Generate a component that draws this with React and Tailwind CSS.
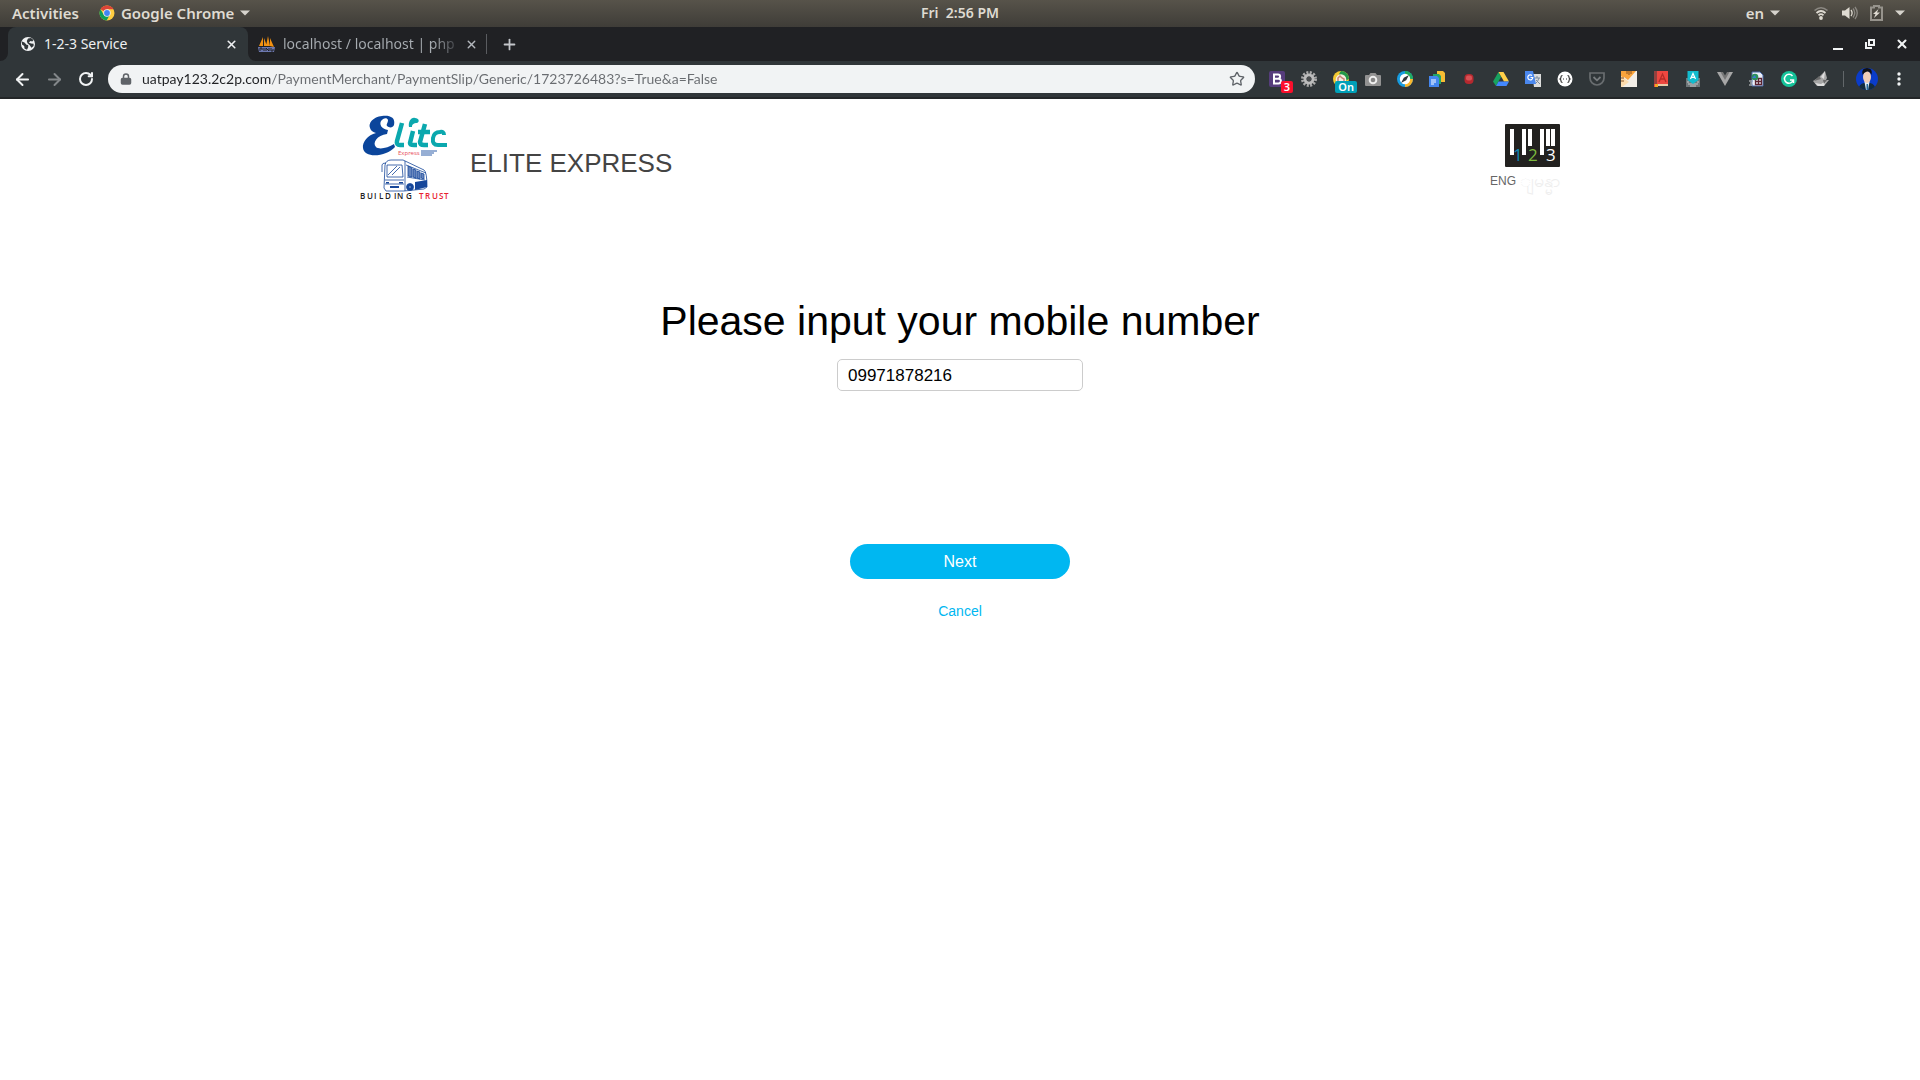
import { ArrowLeft, ArrowRight, Lock, Plus, RotateCw, Star, X } from "lucide-react";

function Caret() {
  return (
    <svg width="10" height="6" viewBox="0 0 10 6" aria-hidden="true">
      <path d="M0 0.5h10L5 5.5z" fill="#d6d3cc" />
    </svg>
  );
}

function ChromeIcon() {
  return (
    <svg width="16" height="16" viewBox="0 0 16 16" aria-hidden="true">
      <circle cx="8" cy="8" r="7.5" fill="#ffcd40" />
      <path d="M8 8L1.5 4.2A7.5 7.5 0 0 1 14.5 4.2H8z" fill="#db4437" />
      <path d="M1.5 4.2A7.5 7.5 0 0 0 7.6 15.5L11 9.6 8 8 4.8 9.7z" fill="#0f9d58" />
      <circle cx="8" cy="8" r="3.7" fill="#f1f1f1" />
      <circle cx="8" cy="8" r="2.9" fill="#4285f4" />
    </svg>
  );
}

function SystemBar() {
  return (
    <header className="grid h-[27px] grid-cols-3 items-center bg-gradient-to-b from-[#57534a] to-[#3f3d38] px-3 pb-0.5 text-[15px] leading-5 font-semibold text-[#dfdbd2]">
      <div className="flex items-center">
        <button type="button">Activities</button>
        <button type="button" className="ml-5 flex items-center gap-1.5">
          <ChromeIcon />
          Google Chrome
          <Caret />
        </button>
      </div>
      <p className="text-center text-sm whitespace-pre">Fri  2:56 PM</p>
      <div className="flex items-center justify-end">
        <button type="button" className="mr-[34px] flex items-center gap-1.5">
          en <Caret />
        </button>
        <button type="button" aria-label="System menu" className="flex items-center gap-3 pr-[3px]">
          <svg width="16" height="14" viewBox="0 0 16 14" fill="none">
            <path d="M0.5 4.5Q7-1 13.5 4.5" stroke="#8b8882" strokeWidth="1.6" />
            <path d="M2.5 7Q7 3 11.5 7M4.5 9.3Q7 7 9.5 9.3" stroke="#dfdbd2" strokeWidth="1.8" />
            <circle cx="7" cy="12" r="1.9" fill="#dfdbd2" />
          </svg>
          <svg width="16" height="14" viewBox="0 0 16 14" fill="none">
            <path d="M0 4.5h3L7.5 1v12L3 9.5H0z" fill="#dfdbd2" />
            <path d="M9 4q2.2 3 0 6" stroke="#dfdbd2" strokeWidth="1.3" />
            <path d="M11 2.5q3.5 4.5 0 9M13 1q4.5 6 0 12" stroke="#8b8882" strokeWidth="1.3" />
          </svg>
          <svg width="13" height="16" viewBox="0 0 13 16" fill="none">
            <path d="M1 2.5h3V1h5v1.5h3V15H1z" stroke="#96938c" strokeWidth="2" />
            <path d="M8.5 4L3 9h2.5l-1.5 4 6-5.500H7z" fill="#dfdbd2" />
          </svg>
          <Caret />
        </button>
      </div>
    </header>
  );
}

function TabBar() {
  return (
    <div className="flex h-[34px] items-center bg-[#202124] pl-2 text-sm">
      <div className="relative flex h-full w-60 items-center rounded-t-lg bg-[#303639] pr-2.5 pl-3 text-[#eef0f1]">
        <svg className="absolute bottom-0 -left-2" width="8" height="8" viewBox="0 0 8 8">
          <path d="M8 0v8H0a8 8 0 0 0 8-8z" fill="#303639" />
        </svg>
        <svg className="absolute -right-2 bottom-0" width="8" height="8" viewBox="0 0 8 8">
          <path d="M0 0v8h8a8 8 0 0 1-8-8z" fill="#303639" />
        </svg>
        <svg width="16" height="16" viewBox="0 0 16 16">
          <circle cx="8" cy="8" r="7" fill="#f1f3f4" />
          <path d="M2 5.5l2.5 1 2 2.2 1.7.3v2.3L7 13.8 4.5 12.5 4.2 10 2 8.5zM8 2.5l3-.5 2.5 2-1.2 1.5-1.8-.4-1.7 1.3 2.2 1.1 2.6.3v2.3l-2.2 1.6-1.6-2.5L7.5 7.3 6.8 5z" fill="#303639" />
        </svg>
        <span className="ml-2 flex-1">1-2-3 Service</span>
        <button type="button" aria-label="Close 1-2-3 Service">
          <X size={13} strokeWidth={3} />
        </button>
      </div>
      <div className="flex h-full w-[238px] items-center pr-2 pl-2.5">
        <svg width="17" height="16" viewBox="0 0 17 16">
          <path d="M5 1L1 10h4zM6 2v8h3zM10 0L8 10h4zM12 2v8l4 1z" fill="#f29111" />
          <path d="M0 11h17l-1 5H1z" fill="#6c78af" />
          <path d="M2 15v-3h2v2M6 12v3M8 15v-3l3 3v-3M13 12v3h2v-2" fill="none" stroke="#202124" />
        </svg>
        <span className="ml-2 flex-1 bg-[linear-gradient(90deg,#a8adb2_150px,#303236_176px)] bg-clip-text whitespace-nowrap text-transparent">
          localhost / localhost | php
        </span>
        <button type="button" aria-label="Close localhost" className="text-[#b4b8bd]">
          <X size={13} strokeWidth={2.5} />
        </button>
      </div>
      <div className="h-5 w-px bg-[#5a5c60]" />
      <button type="button" aria-label="New tab" className="ml-3.5 text-[#c3c6ca]">
        <Plus size={17} strokeWidth={2.5} />
      </button>
      <div className="ml-auto flex items-center pr-0.5 text-[#f1f3f4]">
        <button type="button" aria-label="Minimize" className="flex w-8 justify-center">
          <svg width="12" height="12"><path d="M1 10h10v2H1z" fill="currentColor" /></svg>
        </button>
        <button type="button" aria-label="Restore" className="flex w-8 justify-center">
          <svg width="12" height="12" fill="none" stroke="currentColor" strokeWidth="2">
            <path d="M5 2h5v5H5zM2 4v6h6" />
          </svg>
        </button>
        <button type="button" aria-label="Close window" className="flex w-8 justify-center">
          <X size={14} strokeWidth={3.5} />
        </button>
      </div>
    </div>
  );
}

const extensions = [
  {
    name: "Bootstrap",
    badge: "3",
    badgeClass: "bg-[#fb0f2c]",
    art: (
      <>
        <rect width="16" height="16" rx="2" fill="#563d7c" />
        <path d="M5 3.5h4a2 2 0 0 1 0 4.2H5zM5 7.7h4.500a2.3 2.3 0 0 1 0 4.8H5z" fill="none" stroke="#fff" strokeWidth="2" />
      </>
    ),
  },
  {
    name: "Settings",
    art: (
      <>
        <circle cx="8" cy="8" r="6.5" fill="none" stroke="#aaa" strokeWidth="3" strokeDasharray="2 1.4" />
        <circle cx="8" cy="8" r="4" fill="none" stroke="#bcbcbc" strokeWidth="3" />
        <circle cx="8" cy="8" r="2.4" fill="#4b4e50" />
      </>
    ),
  },
  {
    name: "Toggle",
    badge: "On",
    badgeClass: "bg-[#00a0b8]",
    art: (
      <>
        <circle cx="8" cy="8" r="8" fill="#f5c932" />
        <path d="M8 0a8 8 0 0 1 8 8l-4 2L6 3z" fill="#23984a" />
        <circle cx="8" cy="8.5" r="5.3" fill="#f6ede1" />
        <path d="M5 10V7l2-2 2 2 2 1v2" fill="none" stroke="#c98477" strokeWidth="1.5" />
      </>
    ),
  },
  {
    name: "Screenshot",
    art: (
      <>
        <path d="M1 4h3l1.5-2h5L12 4h3q1 0 1 1v9q0 1-1 1H1q-1 0-1-1V5q0-1 1-1z" fill="#929292" />
        <circle cx="8" cy="9" r="4.3" fill="#eee" />
        <circle cx="8" cy="9" r="2.3" fill="#858585" />
      </>
    ),
  },
  {
    name: "Compass",
    art: (
      <>
        <circle cx="8" cy="8" r="8" fill="#169ce0" />
        <path d="M8 0a8 8 0 0 1 8 8H8z" fill="#22ad60" />
        <path d="M16 8a8 8 0 0 1-8 8V8z" fill="#fbb62b" />
        <circle cx="8" cy="8" r="5.2" fill="#fff" />
        <path d="M12 4L9.2 9.2 4 12l2.8-5.200z" fill="#30363a" />
      </>
    ),
  },
  {
    name: "Copy files",
    art: (
      <>
        <path d="M8 0h6l2 2v9H8z" fill="#f6bd33" />
        <path d="M4 3h6l2 2v8H4z" fill="#23a566" />
        <path d="M0 5h8l2 2v9H0z" fill="#4486ee" />
        <path d="M2 9h5M2 11h5M2 13h3" stroke="#fff" />
      </>
    ),
  },
  {
    name: "Recorder",
    art: (
      <>
        <rect x="3.5" y="3" width="9" height="10" rx="4" fill="#b5292f" />
        <rect x="5" y="4.5" width="6" height="5" rx="2" fill="#d85155" />
      </>
    ),
  },
  {
    name: "Drive",
    art: (
      <>
        <path d="M5.5 1L0 10.5 3 15 8 6z" fill="#18a260" />
        <path d="M5.5 1h5L16 10.5h-5z" fill="#ffcf48" />
        <path d="M5.5 10.5H16L13.500 15H3z" fill="#4387fd" />
      </>
    ),
  },
  {
    name: "Translate",
    art: (
      <>
        <path d="M7 3h9v13H9z" fill="#dcdcdc" />
        <path d="M9 7h6M12 5v2M14 7q-1 4-4 6M11 9l4 4" stroke="#7b8ba0" fill="none" />
        <path d="M0 0h8l3 13H0z" fill="#4a87ed" />
        <path d="M7 4.5a2.5 2.5 0 1 0 .8 2H5.5" fill="none" stroke="#fff" strokeWidth="1.2" />
      </>
    ),
  },
  {
    name: "JSON viewer",
    art: (
      <>
        <circle cx="8" cy="8" r="7.5" fill="#fff" />
        <path d="M5.500 4.500q-1.500 0-1.500 1.500t-1 2q1 .5 1 2t1.500 1.500M10.500 4.500q1.500 0 1.500 1.500t1 2q-1 .5-1 2t-1.500 1.500" fill="none" stroke="#333" strokeWidth="1.2" />
        <path d="M6 8h1M9 8h1" stroke="#333" strokeWidth="1.2" />
      </>
    ),
  },
  {
    name: "Pocket",
    art: (
      <>
        <path d="M1 2h14v5a7 7 0 0 1-14 0z" fill="none" stroke="#696d70" strokeWidth="1.7" />
        <path d="M4.5 6L8 9.3 11.5 6" fill="none" stroke="#777b7e" strokeWidth="1.8" />
      </>
    ),
  },
  {
    name: "Notes",
    art: (
      <>
        <path d="M0 0h16v16H0z" fill="#f2eee8" />
        <path d="M0 0h15L7 9 3 6 0 8z" fill="#faa43c" />
        <path d="M0 5l8 6-7 5H0z" fill="#fddcae" />
        <path d="M6 0v3M8 0v4M10 0v3M0 7h3M0 10h3" stroke="#8a5223" />
      </>
    ),
  },
  {
    name: "Dictionary",
    art: (
      <>
        <path d="M1 0h14v13H3v3H1z" fill="#ed4740" />
        <path d="M1 0h3v13H1z" fill="#94413f" />
        <path d="M3 13h12v2H3z" fill="#e8c9a8" />
        <path d="M2 13h3v3H2z" fill="#f5a623" />
        <path d="M6 11l3.5-8L13 11M7 8h5" fill="none" stroke="#b52c27" strokeWidth="1.3" />
      </>
    ),
  },
  {
    name: "Input tools",
    art: (
      <>
        <path d="M1 7h14v9H1z" fill="#6f777a" />
        <path d="M3 13h10M2 11h2M12 11h2M5 15h6" stroke="#c8cccd" />
        <path d="M2.5 0h11v9L8 13 2.5 9z" fill="#12bccf" />
        <path d="M5.5 8L8 2.5 10.5 8M6.5 6.300h3" fill="none" stroke="#fff" strokeWidth="1.2" />
      </>
    ),
  },
  {
    name: "Vue",
    art: (
      <>
        <path d="M0 1h16L8 15z" fill="#a7a7a7" />
        <path d="M3.5 1h9L8 9z" fill="#777" />
        <path d="M6 1h4L8 4.5z" fill="#303639" />
      </>
    ),
  },
  {
    name: "Page inspector",
    art: (
      <>
        <path d="M3 1h8l3 3v11H3z" fill="#e9eef8" stroke="#4a69a6" />
        <path d="M6.5 7.5h6v6h-6zM9.500 7v7M6 10.5h7" fill="none" stroke="#5d2330" strokeWidth="1.3" />
        <circle cx="6" cy="6" r="3.3" fill="#2a8f5a" />
        <path d="M3 7l3-3 1 3z" fill="#3b79d8" />
        <path d="M0 10h3M1 12h3M0 14h3" stroke="#d7d9dc" />
      </>
    ),
  },
  {
    name: "Grammarly",
    art: (
      <>
        <circle cx="8" cy="8" r="8" fill="#15c39a" />
        <path d="M11.5 5A4.500 4.500 0 1 0 12.300 9M9 9h3.5v3" fill="none" stroke="#fff" strokeWidth="1.5" />
      </>
    ),
  },
  {
    name: "Fox",
    art: (
      <>
        <path d="M12 0l2 7-1 2 3 0-5 6-7 0-4-5 6-4z" fill="#a5a5a5" />
        <path d="M12 0L8 6l3 2zM2 12l6 1 5-3-2 5-6 0z" fill="#dedede" />
        <path d="M6 5L1 10l7-2zM10 9l4 0-3 4z" fill="#6b6b6b" />
      </>
    ),
  },
];

function AddressBar() {
  return (
    <div className="flex h-[38px] items-center border-b-2 border-[#232628] bg-[#303639] text-[#f1f3f4]">
      <div className="flex w-[108px] shrink-0 items-center pl-1.5">
        <button type="button" aria-label="Back" className="flex w-8 justify-center">
          <ArrowLeft size={19} strokeWidth={2.5} />
        </button>
        <button type="button" aria-label="Forward" className="flex w-8 justify-center text-[#83878a]">
          <ArrowRight size={19} strokeWidth={2.5} />
        </button>
        <button type="button" aria-label="Reload" className="flex w-8 justify-center">
          <RotateCw size={16} strokeWidth={3} />
        </button>
      </div>
      <div className="flex h-7 flex-1 items-center rounded-full bg-[#f1f3f4] pr-[10px] pl-3">
        <Lock size={12} strokeWidth={3} className="shrink-0 text-[#5f6368] [&_rect]:fill-[#5f6368]" />
        <input
          type="text"
          aria-label="Address"
          defaultValue="uatpay123.2c2p.com/PaymentMerchant/PaymentSlip/Generic/1723726483?s=True&a=False"
          className="ml-2.5 flex-1 bg-[linear-gradient(90deg,#202124_130px,#696c70_130px)] bg-clip-text font-['Lato',sans-serif] text-sm text-transparent outline-none"
        />
        <button type="button" aria-label="Bookmark this page" className="text-[#5f6368]">
          <Star size={16} />
        </button>
      </div>
      <div className="ml-1.5 flex shrink-0 items-center">
        {extensions.map((ext) => (
          <button key={ext.name} type="button" aria-label={ext.name} className="relative flex w-8 justify-center">
            <svg width="16" height="16" viewBox="0 0 16 16">{ext.art}</svg>
            {ext.badge && (
              <span className={`absolute top-2.5 right-0 rounded-xs px-[3px] text-[11px] leading-3 font-semibold text-white ${ext.badgeClass}`}>
                {ext.badge}
              </span>
            )}
          </button>
        ))}
        <div className="ml-1.5 h-4 w-px bg-[#62676a]" />
        <button type="button" aria-label="Profile" className="ml-3">
          <svg width="22" height="22" viewBox="0 0 22 22">
            <clipPath id="avatar"><circle cx="11" cy="11" r="11" /></clipPath>
            <g clipPath="url(#avatar)">
              <path d="M0 0h22v22H0z" fill="#0b3cc9" />
              <path d="M2 22q1-6 6-7h6q5 1 6 7z" fill="#132b3d" />
              <path d="M8.5 14h5L12 22H10z" fill="#e4edf5" />
              <path d="M10.5 16h1.500l.5 6h-2z" fill="#286a9b" />
              <ellipse cx="11" cy="9" rx="4" ry="6" fill="#f0cdb8" />
              <path d="M6.5 7Q5 0 11 0t4.500 7Q14 3 11 3.500T6.500 7z" fill="#101014" />
            </g>
          </svg>
        </button>
        <button type="button" aria-label="Menu" className="flex w-[42px] justify-center">
          <svg width="4" height="14" fill="currentColor">
            <circle cx="2" cy="2" r="1.7" />
            <circle cx="2" cy="7" r="1.7" />
            <circle cx="2" cy="12" r="1.7" />
          </svg>
        </button>
      </div>
    </div>
  );
}

function EliteLogo() {
  return (
    <svg width="90" height="86" viewBox="0 0 90 86" role="img" aria-label="Elite Express, building trust">
      {/* capital E swash */}
      <path d="M34 10c2-8-5-10-12-9-9 1-14 7-12 12 1 3 3 4 6 5-8 2-14 9-13 15 1 8 13 9 23 5 3-1 7-4 9-6l-1-3c-6 4-15 6-18 3-4-4 1-12 11-13l1-4c-6-1-9-5-7-9 2-3 6-4 7-1 0 3-2 4-1 6 2 2 6 2 7-1z" fill="#0b459b" />
      <g fill="none" stroke="#0ba8ae" strokeWidth="4.5">
        <path d="M42 8l-5 18q-1 4 3 4h4M53 16l-3 12q0 2 4 2h3M65 9l-5 18q0 3 4 3h4M58 17h12" />
        <path d="M84 20q0-4-4-3-6 0-7 6-1 7 5 7h9" strokeWidth="4" />
      </g>
      <path d="M49 12c-1-5 2-10 6-9 4 0 5 4 2 5-3 0-5 1-5 4z" fill="#0ba8ae" />
      <text x="38" y="40" fontSize="6" fill="#e74b56" fontFamily="Open Sans, sans-serif">Express</text>
      <path d="M61 36h16M61 38h13M61 40h11" stroke="#174d9f" strokeWidth=".9" />
      {/* bus */}
      <g fill="#fff" stroke="#17479a" strokeWidth=".8">
        <path d="M25 50Q26 45 31 45H43L64 55Q67 57 67 72L64 74 44 76H26L24 73z" />
        <path d="M27 50h15l1 12H27zM45 46v30M46 50l20 8M47 62l18 3M25 65h19M25 69h19" />
        <path d="M28 60l9-9M32 60l8-8" />
        <path d="M22 57v-7q0-2 4-2" fill="none" />
        <path d="M48 51l4 2v9l-4-1zM53 54l3 1v8l-3-1zM57 56l3 1v7l-3-1zM61 58l3 1v5l-3-1z" fill="#6484bd" />
        <path d="M55 67l12-2v7l-12 3z" fill="#17479a" stroke="none" />
        <circle cx="50" cy="72" r="3.5" fill="#17479a" />
        <circle cx="50" cy="72" r="1" />
      </g>
      <path d="M26 67h3v1.500h-3zM39 67h4v1.500h-4zM30 71h9v2h-9z" fill="#17479a" />
      <g fontSize="8" fontWeight="600" fontFamily="Open Sans, sans-serif">
        {/* one x position per letter, tracked out under the bus */}
        <text x="0 7 14 19 25 34 37 46" y="84" fill="#222">BUILDING</text>
        <text x="59 65 72 79 84" y="84" fill="#e8212e">TRUST</text>
      </g>
    </svg>
  );
}

function OneTwoThreeLogo() {
  return (
    <svg width="55" height="43" viewBox="0 0 55 43" role="img" aria-label="1-2-3">
      <rect width="55" height="43" rx="1" fill="#22211f" />
      <path d="M5 5h4v26H5zM17 5h4v26h-4zM23 5h4v17h-4zM35 5h4v26h-4zM41 5h4v17h-4zM46 5h4v17h-4z" fill="#fff" />
      <g fontSize="17" fontFamily="Open Sans, sans-serif">
        <text x="8" y="37" fill="#0d87b5">1</text>
        <text x="23" y="37" fill="#7cb93e">2</text>
        <text x="41" y="37" fill="#fff">3</text>
      </g>
    </svg>
  );
}

function PaymentPage() {
  return (
    <main className="mx-auto max-w-[1200px] font-['Liberation_Sans',Arial,sans-serif]">
      <div className="flex items-start justify-between pt-4">
        <div className="flex items-center gap-5">
          <EliteLogo />
          <h2 className="pt-2.5 text-[26px] leading-8 text-[#444]">ELITE EXPRESS</h2>
        </div>
        <div className="flex flex-col items-end pt-[9px]">
          <OneTwoThreeLogo />
          <div className="flex items-start gap-1 pt-1.5 text-xs">
            <button type="button" className="text-[#666]">ENG</button>
            <button type="button" className="w-10 text-lg leading-4 whitespace-nowrap text-[#eee]">ျမန္မာ</button>
          </div>
        </div>
      </div>
      <form className="flex flex-col items-center pt-24" onSubmit={(e) => e.preventDefault()}>
        <label htmlFor="mobile" className="text-[41px] leading-12 text-black">
          Please input your mobile number
        </label>
        <input
          id="mobile"
          type="tel"
          defaultValue="09971878216"
          className="mt-3.5 h-8 w-[246px] rounded-[5px] border border-[#ccc] bg-white px-2.5 pt-0.5 text-[17px] text-black outline-none"
        />
        <button type="submit" className="mt-[153px] h-[35px] w-[220px] rounded-full bg-[#00b7f1] text-base text-white">
          Next
        </button>
        <a href="#cancel" className="mt-[22px] text-sm text-[#00b7f1]">Cancel</a>
      </form>
    </main>
  );
}

export default function App() {
  return (
    <div className="min-h-screen bg-white font-['Noto_Sans',sans-serif]">
      <SystemBar />
      <TabBar />
      <AddressBar />
      <PaymentPage />
    </div>
  );
}
